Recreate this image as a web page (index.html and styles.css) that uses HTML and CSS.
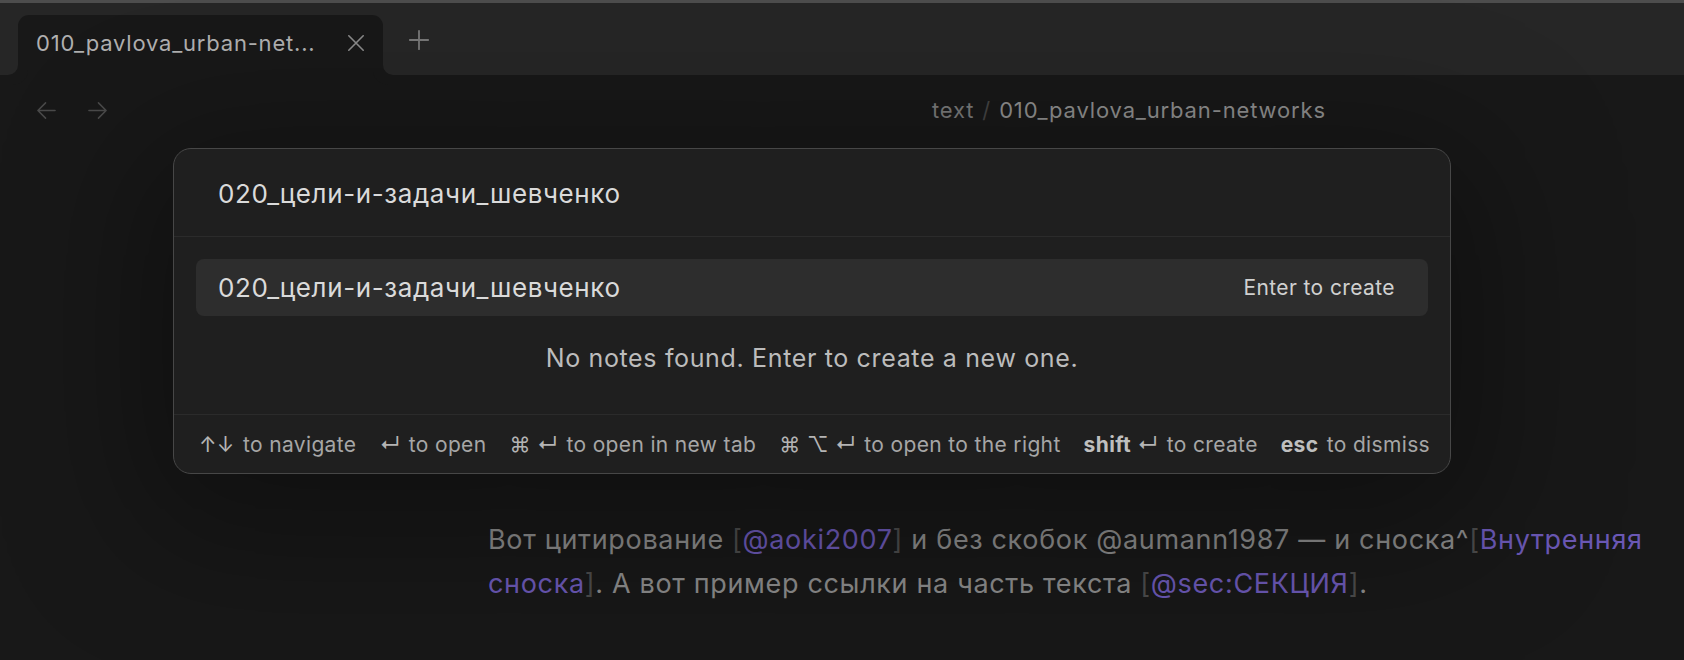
FILE: index.html
```html
<!DOCTYPE html>
<html lang="ru">
<head>
<meta charset="utf-8">
<title>Obsidian</title>
<link rel="stylesheet" href="styles.css">
</head>
<body>
<div class="window">
  <div class="tabbar">
    <div class="tab active">
      <span class="tab-title">010_pavlova_urban-net...</span>
      <svg class="tab-close" width="20" height="20" viewBox="0 0 20 20"><path d="M2 2 L18 18 M18 2 L2 18" stroke="currentColor" stroke-width="1.8" stroke-linecap="round" fill="none"/></svg>
    </div>
    <div class="new-tab">
      <svg width="24" height="24" viewBox="0 0 24 24"><path d="M12 2 V22 M2 12 H22" stroke="currentColor" stroke-width="2" stroke-linecap="round" fill="none"/></svg>
    </div>
  </div>
  <div class="view">
    <div class="view-header">
      <div class="nav">
        <svg width="22" height="22" viewBox="0 0 22 22"><path d="M20 11 H2 M10 3 L2 11 L10 19" stroke="currentColor" stroke-width="1.6" stroke-linecap="round" stroke-linejoin="round" fill="none"/></svg>
        <svg width="22" height="22" viewBox="0 0 22 22"><path d="M2 11 H20 M12 3 L20 11 L12 19" stroke="currentColor" stroke-width="1.6" stroke-linecap="round" stroke-linejoin="round" fill="none"/></svg>
      </div>
      <div class="breadcrumb"><span class="crumb-folder">text</span><span class="crumb-sep">/</span><span class="crumb-file">010_pavlova_urban-networks</span></div>
    </div>
    <div class="content">
      <p>Вот цитирование <span class="br">[</span><span class="link">@aoki2007</span><span class="br">]</span> и без скобок @aumann1987 — и сноска^<span class="br">[</span><span class="link">Внутренняя сноска</span><span class="br">]</span>. А вот пример ссылки на часть текста <span class="br">[</span><span class="link">@sec:СЕКЦИЯ</span><span class="br">]</span>.</p>
    </div>
  </div>

  <div class="modal">
    <div class="prompt-input">020_цели-и-задачи_шевченко</div>
    <div class="results">
      <div class="suggestion">
        <span class="sugg-title">020_цели-и-задачи_шевченко</span>
        <span class="sugg-aux">Enter to create</span>
      </div>
      <div class="empty">No notes found. Enter to create a new one.</div>
    </div>
    <div class="instructions">
      <span class="instr"><span class="cmd">↑↓</span> to navigate</span>
      <span class="instr"><span class="cmd">↵</span> to open</span>
      <span class="instr"><span class="cmd">⌘ ↵</span> to open in new tab</span>
      <span class="instr"><span class="cmd">⌘ ⌥ ↵</span> to open to the right</span>
      <span class="instr"><span class="cmd"><b>shift</b> ↵</span> to create</span>
      <span class="instr"><span class="cmd"><b>esc</b></span> to dismiss</span>
    </div>
  </div>
</div>
</body>
</html>
```

FILE: styles.css
```css
* { box-sizing: border-box; }
html, body {
  margin: 0;
  padding: 0;
  background: #181818;
  font-family: Inter, "Noto Sans", "DejaVu Sans", sans-serif;
  overflow: hidden;
}
.window {
  position: relative;
  width: 1684px;
  height: 660px;
  background: #181818;
  border-top: 3px solid #4d4d4d;
  display: flex;
  flex-direction: column;
}
.tabbar {
  height: 72px;
  background: #262626;
  display: flex;
  align-items: flex-end;
  padding-left: 18px;
}
.tab {
  width: 365px;
  height: 60px;
  background: #181818;
  border-radius: 11px 11px 0 0;
  display: flex;
  align-items: center;
  padding: 0 20px 4px 18px;
  position: relative;
}
.tab::before, .tab::after {
  content: "";
  position: absolute;
  bottom: 0;
  width: 10px;
  height: 10px;
  background: transparent;
}
.tab::before { left: -10px; border-bottom-right-radius: 10px; box-shadow: 5px 5px 0 5px #181818; }
.tab::after { right: -10px; border-bottom-left-radius: 10px; box-shadow: -5px 5px 0 5px #181818; }
.tab-title {
  flex: 1;
  color: #b0b0b0;
  font-size: 22px;
  letter-spacing: 0.8px;
  white-space: nowrap;
}
.tab-close {
  color: #8a8a8a;
  width: 18px;
  height: 18px;
  margin-right: -2px;
}
.new-tab {
  color: #777;
  margin-left: 25px;
  height: 60px;
  display: flex;
  align-items: center;
  padding-bottom: 10px;
}
.new-tab svg { width: 22px; height: 22px; }
.view { flex: 1; display: flex; flex-direction: column; }
.view-header {
  height: 70px;
  display: flex;
  align-items: center;
  padding-left: 36px;
}
.nav {
  display: flex;
  gap: 30px;
  color: #4a4a4a;
}
.nav svg { width: 21px; height: 21px; }
.breadcrumb {
  margin-left: 824px;
  font-size: 22px;
  letter-spacing: 0.85px;
  display: flex;
  align-items: center;
}
.crumb-folder { color: #7a7a7a; }
.crumb-sep { color: #444; margin: 0 8px; }
.crumb-file { color: #8f8f8f; }
.content {
  padding: 0 30px 0 488px;
}
.content p {
  margin: 373px 0 0 0;
  font-size: 27px;
  letter-spacing: 0.66px;
  line-height: 44px;
  color: #8a8a8a;
}
.link { color: #6b58b5; }
.br { color: #4b4b4b; }

.modal {
  position: absolute;
  left: 173px;
  top: 145px;
  width: 1278px;
  height: 326px;
  background: #1f1f1f;
  border: 1px solid #474747;
  border-radius: 18px;
  box-shadow: 0 30px 140px 30px rgba(0,0,0,0.35);
  display: flex;
  flex-direction: column;
}
.prompt-input {
  height: 88px;
  padding: 30px 44px 0 44px;
  font-size: 26px;
  letter-spacing: 0.6px;
  line-height: 30px;
  color: #dadada;
  border-bottom: 1px solid #2b2b2b;
}
.results {
  padding: 22px 22px 0 22px;
  flex: 1;
  border-bottom: 1px solid #2b2b2b;
}
.suggestion {
  height: 57px;
  background: #2d2d2d;
  border-radius: 8px;
  display: flex;
  align-items: center;
  justify-content: space-between;
  padding: 0 33px 0 22px;
}
.sugg-title {
  font-size: 26px;
  letter-spacing: 0.6px;
  color: #dadada;
}
.sugg-aux {
  font-size: 21px;
  letter-spacing: 0.4px;
  color: #d0d0d0;
}
.empty {
  text-align: center;
  font-size: 25px;
  letter-spacing: 0.65px;
  line-height: 30px;
  margin-top: 27px;
  color: #bcbcbc;
}
.instructions {
  height: 58px;
  display: flex;
  align-items: center;
  gap: 23px;
  padding: 0 0 0 25px;
  font-size: 21px;
  letter-spacing: 0.35px;
  color: #a6a6a6;
}
.cmd { color: #b4b4b4; margin-right: 2px; }
.cmd b { font-weight: 700; color: #bfbfbf; }
```
